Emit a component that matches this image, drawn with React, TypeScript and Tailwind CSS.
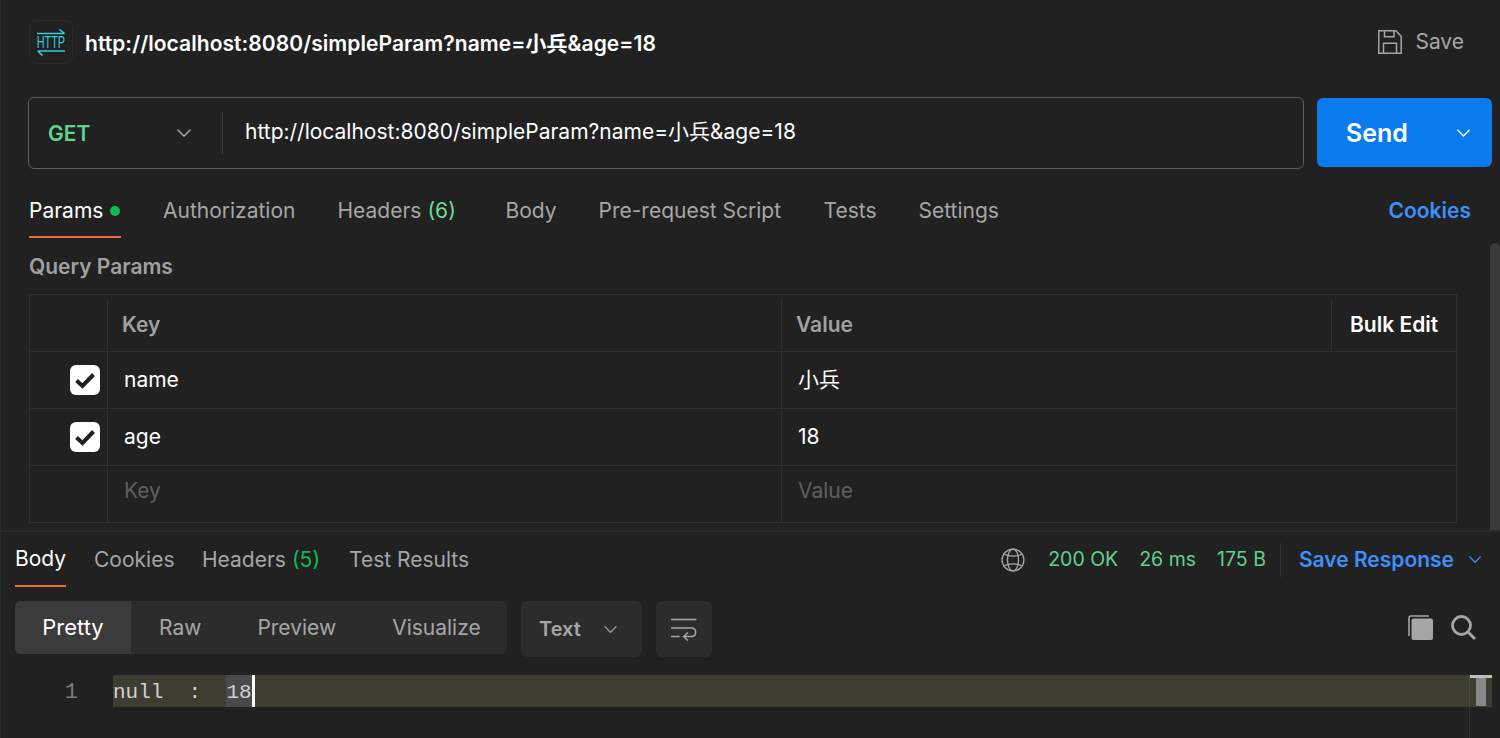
import React from "react";

const Chevron = ({ className = "" }: { className?: string }) => (
  <svg viewBox="0 0 16 10" fill="none" stroke="currentColor" strokeWidth="1.4" className={className}>
    <path d="M1.5 1.5 8 8.2l6.5-6.7" />
  </svg>
);

const Tab = ({ label, count, active, dot, w, top = "", countColor = "text-[#6bdd9a]" }: { label: string; count?: string; active?: boolean; dot?: boolean; w: string; top?: string; countColor?: string }) => (
  <div className={`flex h-full items-center ${w} ${top} ${active ? "text-white" : "text-[#a6a6a6]"}`}>
    <span>{label}</span>
    {count && <span className={`ml-[6px] ${countColor}`}>{count}</span>}
    {dot && <span className="ml-[7px] h-[10px] w-[10px] rounded-full bg-[#0cbb52]" />}
  </div>
);

const Check = () => (
  <div className="flex h-[30px] w-[30px] items-center justify-center rounded-[6px] bg-white">
    <svg viewBox="0 0 24 24" className="h-[24px] w-[24px]" fill="none" stroke="#212121" strokeWidth="4">
      <path d="M3.5 12.500 9.500 18 20.500 6.500" />
    </svg>
  </div>
);

const Row = ({ k, v, checked, placeholder }: { k: string; v: string; checked?: boolean; placeholder?: boolean }) => (
  <div className="flex h-[57px] border-b border-[#303030] text-[21px]">
    <div className="flex w-[78px] shrink-0 items-center justify-end border-r border-[#303030] pr-[7px]">
      {checked && <Check />}
    </div>
    <div className={`flex w-[674px] shrink-0 items-center border-r border-[#303030] pl-4 ${placeholder ? "pb-[6px] text-[#5f5f5f]" : "text-white"}`}>{k}</div>
    <div className={`flex flex-1 items-center pl-4 ${placeholder ? "pb-[6px] text-[#5f5f5f]" : "text-white"}`}>{v}</div>
  </div>
);

export default function App() {
  return (
    <div
      className="relative flex h-[738px] w-[1500px] flex-col overflow-hidden border-l border-[#2b2b2b] bg-[#212121] text-[#a6a6a6]"
      style={{ fontFamily: 'Inter, "Noto Sans CJK SC", sans-serif' }}
    >
      {/* title */}
      <div className="flex h-[97px] shrink-0 items-start pl-[28px] pr-[36px] pt-[20px]">
        <div className="flex h-[44px] w-[44px] flex-col items-center justify-center rounded-[8px] border border-[#2b2b2b] text-[#35cde0]">
          <svg viewBox="0 0 28 6" className="h-[6px] w-[28px]" fill="none" stroke="currentColor" strokeWidth="1.6"><path d="M0 4.500h27.500M22.500 0.500l5 4" /></svg>
          <span className="inline-block h-[15px] scale-x-[0.68] text-[16px] leading-[15px]" style={{ fontFamily: '"Liberation Sans", sans-serif' }}>HTTP</span>
          <svg viewBox="0 0 28 6" className="h-[6px] w-[28px]" fill="none" stroke="currentColor" strokeWidth="1.6"><path d="M28 1H0.800M5.500 5.500 0.800 1" /></svg>
        </div>
        <div className="ml-[12px] mt-[1px] flex h-[46px] items-center text-[21px] font-semibold tracking-[0.06px] text-white">http://localhost:8080/simpleParam?name=小兵&amp;age=18</div>
        <div className="ml-auto flex h-[44px] items-center">
          <svg viewBox="0 0 24 24" className="mr-[13px] h-[24px] w-[24px]" fill="none" stroke="#a6a6a6" strokeWidth="1.5">
            <path d="M.8.8h17l5.400 5.400v17H.8zM6.500.8v6h9.500v-6M5.500 23.200v-10h13v10" />
          </svg>
          <span className="text-[21px]">Save</span>
        </div>
      </div>

      {/* url bar */}
      <div className="flex h-[72px] shrink-0 items-start pl-[27px] pr-[7px]">
        <div className="flex h-[72px] w-[1276px] items-center rounded-[6px] border border-[#5c5c5c]">
          <span className="ml-[19px] mt-[2px] w-[128px] text-[21px] font-semibold text-[#60d28e]">GET</span>
          <Chevron className="h-[10px] w-[16px] text-[#a6a6a6]" />
          <div className="ml-[30px] h-[42px] w-px bg-[#3d3d3d]" />
          <span className="mb-[3px] ml-[22px] text-[21px] text-white">http://localhost:8080/simpleParam?name=小兵&amp;age=18</span>
        </div>
        <div className="ml-[13px] mt-[1px] flex h-[69px] w-[175px] items-center rounded-[6px] bg-[#097bed] text-white">
          <span className="ml-[29px] mt-[3px] text-[25px] font-semibold">Send</span>
          <Chevron className="ml-[48px] mt-[1px] h-[10px] w-[15px]" />
        </div>
      </div>

      {/* request tabs */}
      <div className="mt-[3px] flex h-[66px] shrink-0 items-stretch pl-[28px] pr-[29px] text-[21px]">
        <div className="flex h-full w-[134px]">
          <div className="flex h-full w-[92px] border-b-2 border-[#f26b3a]"><Tab label="Params" active dot w="" top="pt-[14px]" /></div>
        </div>
        <Tab label="Authorization" w="w-[174.5px]" top="pt-[12px]" />
        <Tab label="Headers" count="(6)" w="w-[168px]" top="pt-[12px]" />
        <Tab label="Body" w="w-[93px]" top="pt-[12px]" />
        <Tab label="Pre-request Script" w="w-[225px]" top="pt-[12px]" />
        <Tab label="Tests" w="w-[95px]" top="pt-[12px]" />
        <Tab label="Settings" w="w-[100px]" top="pt-[12px]" />
        <span className="ml-auto flex items-center pt-[12px] font-semibold text-[#3e8ffa]">Cookies</span>
      </div>

      {/* params */}
      <div className="flex h-[56px] shrink-0 items-center pl-[28px] pt-[1px] text-[21px] font-semibold text-[#a0a0a0]">Query Params</div>
      <div className="ml-[28px] w-[1428px] shrink-0 border border-b-0 border-[#303030]">
        <div className="flex h-[57px] border-b border-[#303030] pt-[3px] text-[21px] font-semibold text-[#a0a0a0]">
          <div className="w-[78px] shrink-0 border-r border-[#303030]" />
          <div className="flex w-[674px] shrink-0 items-center border-r border-[#303030] pl-[14px]">Key</div>
          <div className="flex w-[550px] shrink-0 items-center border-r border-[#303030] pl-[14px]">Value</div>
          <div className="flex flex-1 items-center pl-[18px] text-white">Bulk Edit</div>
        </div>
        <Row k="name" v="小兵" checked />
        <Row k="age" v="18" checked />
        <Row k="Key" v="Value" placeholder />
      </div>

      {/* response */}
      <div className="mt-[7px] flex-1 border-t-2 border-[#2b2b2b]">
        <div className="flex h-[55px] items-center pl-[14px] pr-[18px] text-[21px]">
          <div className="flex h-full w-[79px] items-center">
            <div className="flex h-full w-[51px] items-center border-b-2 border-[#f26b3a] text-white">Body</div>
          </div>
          <Tab label="Cookies" w="w-[108px]" />
          <Tab label="Headers" count="(5)" w="w-[147px]" countColor="text-[#0cbb52]" />
          <Tab label="Test Results" w="w-[160px]" />
          <div className="ml-auto flex items-center">
            <svg viewBox="0 0 26 26" className="h-[24px] w-[24px]" fill="none" stroke="#a6a6a6" strokeWidth="1.4">
              <circle cx="13" cy="13" r="11.800" />
              <ellipse cx="13" cy="13" rx="6" ry="11.800" />
              <path d="M3 6.500c5 3 15 3 20 0M3 19.500c5-3 15-3 20 0" />
            </svg>
            <span className="ml-[23px] text-[19.5px] text-[#60d28e]">200 OK</span>
            <span className="ml-[21px] text-[19.5px] text-[#60d28e]">26 ms</span>
            <span className="ml-[21px] text-[19.5px] text-[#60d28e]">175 B</span>
            <div className="ml-[14px] h-[34px] w-px bg-[#333333]" />
            <span className="ml-[18px] font-semibold text-[#3e8ffa]">Save Response</span>
            <Chevron className="ml-[14px] h-[9px] w-[14px] text-[#3e8ffa]" />
          </div>
        </div>

        <div className="mt-[14px] flex h-[53px] items-start pl-[14px] pr-[24px] text-[21px]">
          <div className="flex h-[53px] w-[492px] items-center rounded-[6px] bg-[#2c2c2c]">
            <div className="flex h-full w-[116px] items-center justify-center rounded-l-[6px] bg-[#3b3b3b] text-[22px] text-white">Pretty</div>
            <span className="ml-[28px]">Raw</span>
            <span className="ml-[56px]">Preview</span>
            <span className="ml-[56px]">Visualize</span>
          </div>
          <div className="ml-[14px] flex h-[56px] w-[121px] items-center rounded-[6px] bg-[#2c2c2c] pl-[18px] text-[20px] font-semibold">
            Text
            <Chevron className="ml-[22px] h-[9px] w-[15px]" />
          </div>
          <div className="ml-[14px] flex h-[56px] w-[56px] items-center justify-center rounded-[6px] bg-[#2c2c2c]">
            <svg viewBox="0 0 26 24" className="h-[24px] w-[26px]" fill="none" stroke="#a6a6a6" strokeWidth="1.500">
              <path d="M0 2.500h25.500M0 19.500h8.500M0 11h21a4.300 4.300 0 0 1 0 8.500h-8M17 15.500l-4.500 4 4.500 4" />
            </svg>
          </div>
          <div className="ml-auto flex h-[53px] items-center gap-[18px]">
            <svg viewBox="0 0 25 25" className="h-[25px] w-[25px]" fill="#a6a6a6">
              <rect x="3.500" y="3.500" width="21.500" height="21.500" rx="2" />
              <path d="M1 21V3a2 2 0 0 1 2-2h18" fill="none" stroke="#a6a6a6" strokeWidth="1.600" />
            </svg>
            <svg viewBox="0 0 25 25" className="h-[25px] w-[25px]" fill="none" stroke="#a6a6a6" strokeWidth="2.800">
              <circle cx="10.500" cy="10.500" r="9" />
              <path d="m17 17 7 7" />
            </svg>
          </div>
        </div>

        <div className="mt-[21px] flex h-[32px] pr-[8px]" style={{ fontFamily: '"Liberation Mono", monospace' }}>
          <div className="flex w-[112px] items-center justify-end pr-[35px] pt-[2px] text-[22px] text-[#7b7b7b]">1</div>
          <div className="flex flex-1 items-center bg-[#3e3d31] text-[21px] text-[#d0d0d0]">
            <span className="mt-[3px] whitespace-pre">null  :  </span>
            <span className="flex h-full items-center bg-[#4a4a4a] pt-[3px]">18</span>
            <span className="h-full w-[3px] bg-white" />
            <div className="relative ml-auto flex h-full w-[23px] justify-center border-l border-[#4a4a4a]">
              <div className="absolute inset-x-0 top-0 h-[3px] bg-[#bdbdbd]" />
              <div className="h-[31px] w-[10px] bg-[#8a8a8a]" />
            </div>
          </div>
        </div>
      </div>

      <div className="absolute right-0 top-[243px] h-[287px] w-[10px] rounded-t-[5px] bg-[#3a3a3a]" />
      <div className="absolute left-[1468px] top-[707px] h-[31px] w-px bg-[#333333]" />
    </div>
  );
}
